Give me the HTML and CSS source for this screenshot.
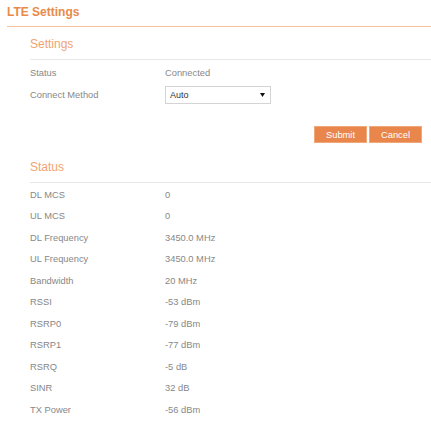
FILE: index.html
```html
<!DOCTYPE html>
<html>
<head>
<meta charset="utf-8">
<link rel="stylesheet" href="styles.css">
</head>
<body>
<div class="page">
  <h1 class="title">LTE Settings</h1>
  <div class="section">
    <h2 class="sec-head">Settings</h2>
    <div class="rows rows-settings">
      <div class="row"><span class="label">Status</span><span class="value">Connected</span></div>
      <div class="row"><span class="label">Connect Method</span>
        <div class="select"><span>Auto</span><svg class="arrow" width="5" height="4" viewBox="0 0 5 4"><path d="M0 0 L5 0 L2.5 4 Z" fill="#111"/></svg></div>
      </div>
    </div>
    <div class="actions">
      <button class="btn">Submit</button>
      <button class="btn">Cancel</button>
    </div>
    <h2 class="sec-head sec-status">Status</h2>
    <div class="rows rows-status">
      <div class="row"><span class="label">DL MCS</span><span class="value">0</span></div>
      <div class="row"><span class="label">UL MCS</span><span class="value">0</span></div>
      <div class="row"><span class="label">DL Frequency</span><span class="value">3450.0 MHz</span></div>
      <div class="row"><span class="label">UL Frequency</span><span class="value">3450.0 MHz</span></div>
      <div class="row"><span class="label">Bandwidth</span><span class="value">20 MHz</span></div>
      <div class="row"><span class="label">RSSI</span><span class="value">-53 dBm</span></div>
      <div class="row"><span class="label">RSRP0</span><span class="value">-79 dBm</span></div>
      <div class="row"><span class="label">RSRP1</span><span class="value">-77 dBm</span></div>
      <div class="row"><span class="label">RSRQ</span><span class="value">-5 dB</span></div>
      <div class="row"><span class="label">SINR</span><span class="value">32 dB</span></div>
      <div class="row"><span class="label">TX Power</span><span class="value">-56 dBm</span></div>
    </div>
  </div>
</div>
</body>
</html>
```
FILE: styles.css
```css
html, body {
  margin: 0;
  padding: 0;
  background: #fff;
}
body {
  font-family: "Liberation Sans", Arial, sans-serif;
  color: #888;
}
.page {
  padding-left: 7px;
}
.title {
  margin: 0;
  padding: 5px 0 7px 0;
  font-size: 12px;
  line-height: 14px;
  font-weight: bold;
  color: #e98a4a;
  border-bottom: 1px solid #f5c29c;
}
.section {
  margin-left: 23px;
}
.sec-head {
  margin: 10px 0 0 0;
  padding-bottom: 8px;
  font-size: 12px;
  line-height: 14px;
  font-weight: normal;
  color: #f0a472;
  border-bottom: 1px solid #e8e8e8;
}
.sec-status {
  margin-top: 17px;
  padding-bottom: 8px;
}
.rows {
  display: flex;
  flex-direction: column;
}
.rows-settings {
  padding-top: 2px;
}
.rows-settings .row {
  height: 22px;
}
.rows-status {
  padding-top: 1px;
}
.rows-status .row {
  height: 21.5px;
}
.row {
  display: flex;
  align-items: center;
  font-size: 9.33px;
}
.label {
  width: 135px;
  flex: none;
}
.value {
  color: #888;
}
.select {
  box-sizing: border-box;
  width: 106px;
  height: 18px;
  border: 1px solid #d4d4d4;
  display: flex;
  align-items: center;
  justify-content: space-between;
  padding: 0 5px 0 4px;
  color: #333;
  font-size: 9px;
  margin-top: -1px;
}
.arrow {
  display: block;
}
.actions {
  display: flex;
  justify-content: flex-end;
  gap: 2px;
  margin-top: 20px;
  margin-right: 9px;
}
.btn {
  width: 53px;
  height: 17px;
  padding: 0;
  border: 1px solid #f0a878;
  background: #e8864b;
  color: #fff;
  font-family: "Liberation Sans", Arial, sans-serif;
  font-size: 9.33px;
}
```
